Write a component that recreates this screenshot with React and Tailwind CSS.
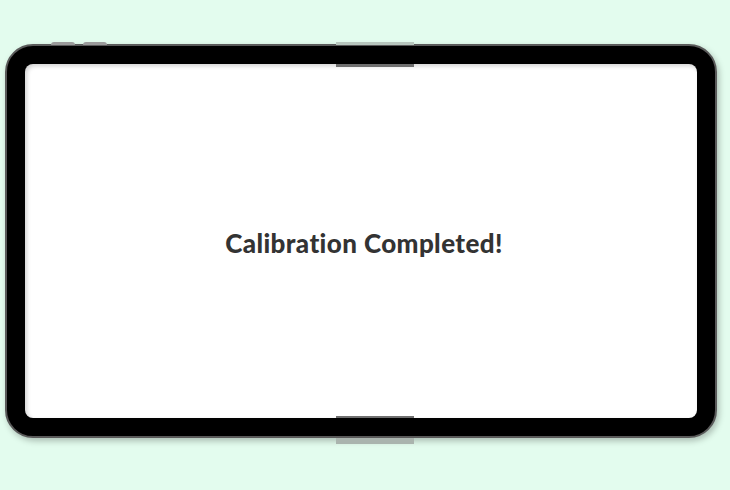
export default function App() {
  return (
    <div className="w-[730px] h-[490px] bg-[#e3fcee] relative overflow-hidden" style={{ fontFamily: "Lato, 'Noto Sans', sans-serif" }}>
      <div className="absolute left-[5px] top-[44px] w-[712px] h-[394px]">
        {/* side buttons */}
        <div className="absolute left-[46px] top-[-2px] w-[24px] h-[3px] rounded-t bg-[#9a9a9a]" />
        <div className="absolute left-[78px] top-[-2px] w-[24px] h-[3px] rounded-t bg-[#9a9a9a]" />
        {/* body */}
        <div className="w-full h-full rounded-[28px] bg-black border-[2px] border-[#5a5a5a] shadow-[2px_3px_6px_rgba(0,0,0,0.25)] p-[18px] flex">
          <div className="relative flex-1 rounded-[8px] bg-white shadow-[inset_2px_2px_4px_rgba(0,0,0,0.18)] flex items-center justify-center">
            <div className="text-[26px] font-black text-[#333] tracking-[0.4px] mt-[4px] ml-[6px]">Calibration Completed!</div>
          </div>
        </div>
        {/* top camera band */}
        <div className="absolute left-[331px] top-[-2px] w-[78px] h-[3px] bg-[#b7c6bd]" />
        <div className="absolute left-[331px] top-[20px] w-[78px] h-[3px] bg-[#6f6f6f]" />
        {/* bottom band */}
        <div className="absolute left-[331px] bottom-[20px] w-[78px] h-[2px] bg-[#6f6f6f]" />
        <div className="absolute left-[331px] bottom-[-6px] w-[78px] h-[6px] bg-[#aab4ae]" />
      </div>
    </div>
  );
}
